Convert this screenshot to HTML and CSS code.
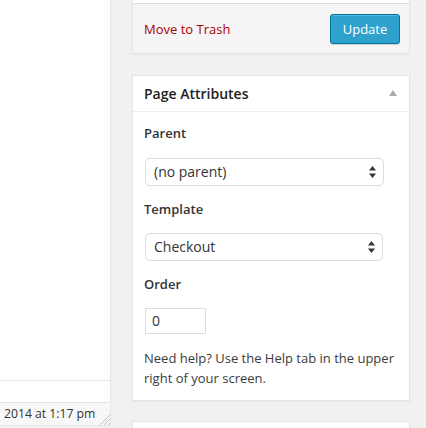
FILE: index.html
```html
<!DOCTYPE html>
<html>
<head>
<meta charset="utf-8">
<link rel="stylesheet" href="styles.css">
</head>
<body>
<div class="wrap">
  <div class="editor-col">
    <div class="editor-body"></div>
    <div class="mce-status"></div>
    <div class="status-info">
      <span class="last-edit">2014 at 1:17 pm</span>
      <svg class="grip" width="11" height="11" viewBox="0 0 11 11">
        <line x1="1" y1="11" x2="11" y2="1" stroke="#c4c4c4" stroke-width="1"/>
        <line x1="5" y1="11" x2="11" y2="5" stroke="#c4c4c4" stroke-width="1"/>
        <line x1="9" y1="11" x2="11" y2="9" stroke="#c4c4c4" stroke-width="1"/>
      </svg>
    </div>
  </div>
  <div class="sidebar">
    <div class="postbox publish-box">
      <div class="misc-top"></div>
      <div class="major-actions">
        <a class="delete-link">Move to Trash</a>
        <span class="button-primary">Update</span>
      </div>
    </div>
    <div class="postbox attr-box">
      <div class="box-head">
        <h3 class="box-title">Page Attributes</h3>
        <svg class="toggle" width="8" height="6" viewBox="0 0 8 6"><polygon points="4,0 8,6 0,6" fill="#aaa"/></svg>
      </div>
      <div class="inside">
        <p class="field-label">Parent</p>
        <div class="select select-parent">
          <span>(no parent)</span>
          <svg class="arrows" width="7" height="12" viewBox="0 0 7 12"><polygon points="3.5,0 7,4.5 0,4.5" fill="#333"/><polygon points="0,7.5 7,7.5 3.5,12" fill="#333"/></svg>
        </div>
        <p class="field-label">Template</p>
        <div class="select select-template">
          <span>Checkout</span>
          <svg class="arrows" width="7" height="12" viewBox="0 0 7 12"><polygon points="3.5,0 7,4.5 0,4.5" fill="#333"/><polygon points="0,7.5 7,7.5 3.5,12" fill="#333"/></svg>
        </div>
        <p class="field-label">Order</p>
        <div class="order-input">0</div>
        <p class="help">Need help? Use the Help tab in the upper right of your screen.</p>
      </div>
    </div>
    <div class="postbox next-box"></div>
  </div>
</div>
</body>
</html>
```

FILE: styles.css
```css
html, body {
  margin: 0;
  padding: 0;
}
body {
  background: #f1f1f1;
  font-family: "Open Sans", "Liberation Sans", sans-serif;
  color: #444;
  font-size: 13px;
  overflow: hidden;
}
.wrap {
  display: flex;
  align-items: flex-start;
  height: 428px;
  overflow: hidden;
}
.editor-col {
  width: 110px;
  border-right: 1px solid #e5e5e5;
  margin-right: 21px;
  display: flex;
  flex-direction: column;
}
.editor-body {
  height: 380px;
  background: #fff;
  border-bottom: 1px solid #e8e8e8;
}
.mce-status {
  height: 21px;
  background: #fff;
}
.status-info {
  position: relative;
  height: 22px;
  background: #f7f7f7;
  border-top: 1px solid #e5e5e5;
  border-bottom: 1px solid #e5e5e5;
  display: flex;
  align-items: center;
  white-space: nowrap;
  overflow: hidden;
}
.last-edit {
  margin-left: 4px;
  font-size: 12.2px;
  color: #333;
  line-height: 20px;
}
.grip {
  position: absolute;
  right: 0;
  bottom: 0;
}
.sidebar {
  width: 278px;
  display: flex;
  flex-direction: column;
}
.postbox {
  background: #fff;
  border: 1px solid #e5e5e5;
  box-shadow: 0 1px 1px rgba(0,0,0,0.04);
}
.publish-box {
  border-top: none;
}
.misc-top {
  height: 3px;
  background: #fff;
}
.major-actions {
  background: #f5f5f5;
  border-top: 1px solid #ddd;
  padding: 10px 9px 9px 11px;
  display: flex;
  align-items: center;
  justify-content: space-between;
}
.delete-link {
  color: #a00;
  font-size: 13px;
  line-height: 20px;
  text-decoration: none;
}
.button-primary {
  display: inline-block;
  box-sizing: border-box;
  height: 30px;
  width: 70px;
  line-height: 28px;
  text-align: center;
  font-size: 13px;
  color: #fff;
  background: #2ea2cc;
  border: 1px solid #0074a2;
  border-radius: 3px;
  box-shadow: inset 0 1px 0 rgba(120,200,230,0.5), 0 1px 0 rgba(0,0,0,0.15);
}
.attr-box {
  margin-top: 21px;
}
.box-head {
  display: flex;
  align-items: center;
  justify-content: space-between;
  height: 35px;
  border-bottom: 1px solid #eee;
  padding: 0 12px 0 11px;
}
.box-title {
  margin: 0;
  font-size: 14px;
  font-weight: 600;
  color: #222;
  line-height: 20px;
}
.toggle {
  display: block;
  margin-top: -1px;
}
.inside {
  padding: 11px 11px 12px 11px;
}
.field-label {
  margin: 0;
  font-size: 13px;
  font-weight: 600;
  color: #333;
  line-height: 20px;
}
.select {
  box-sizing: border-box;
  height: 28px;
  margin: 14px 0 13px 1px;
  border: 1px solid #dcdcdc;
  border-radius: 5px;
  background: #fff;
  display: flex;
  align-items: center;
  justify-content: space-between;
  padding: 0 7px 1px 8px;
  font-size: 14px;
  color: #333;
}
.select-parent {
  width: 239px;
  margin-top: 15px;
}
.select-template {
  width: 238px;
  margin-bottom: 13px;
}
.arrows {
  display: block;
}
.order-input {
  box-sizing: border-box;
  width: 61px;
  height: 26px;
  margin: 14px 0 14px 1px;
  border: 1px solid #ddd;
  background: #fff;
  padding: 0 6px;
  font-size: 14px;
  line-height: 24px;
  color: #333;
}
.help {
  margin: 0;
  font-size: 13px;
  line-height: 20px;
  color: #3c3c3c;
}
.next-box {
  margin-top: 20px;
  height: 40px;
}
```
